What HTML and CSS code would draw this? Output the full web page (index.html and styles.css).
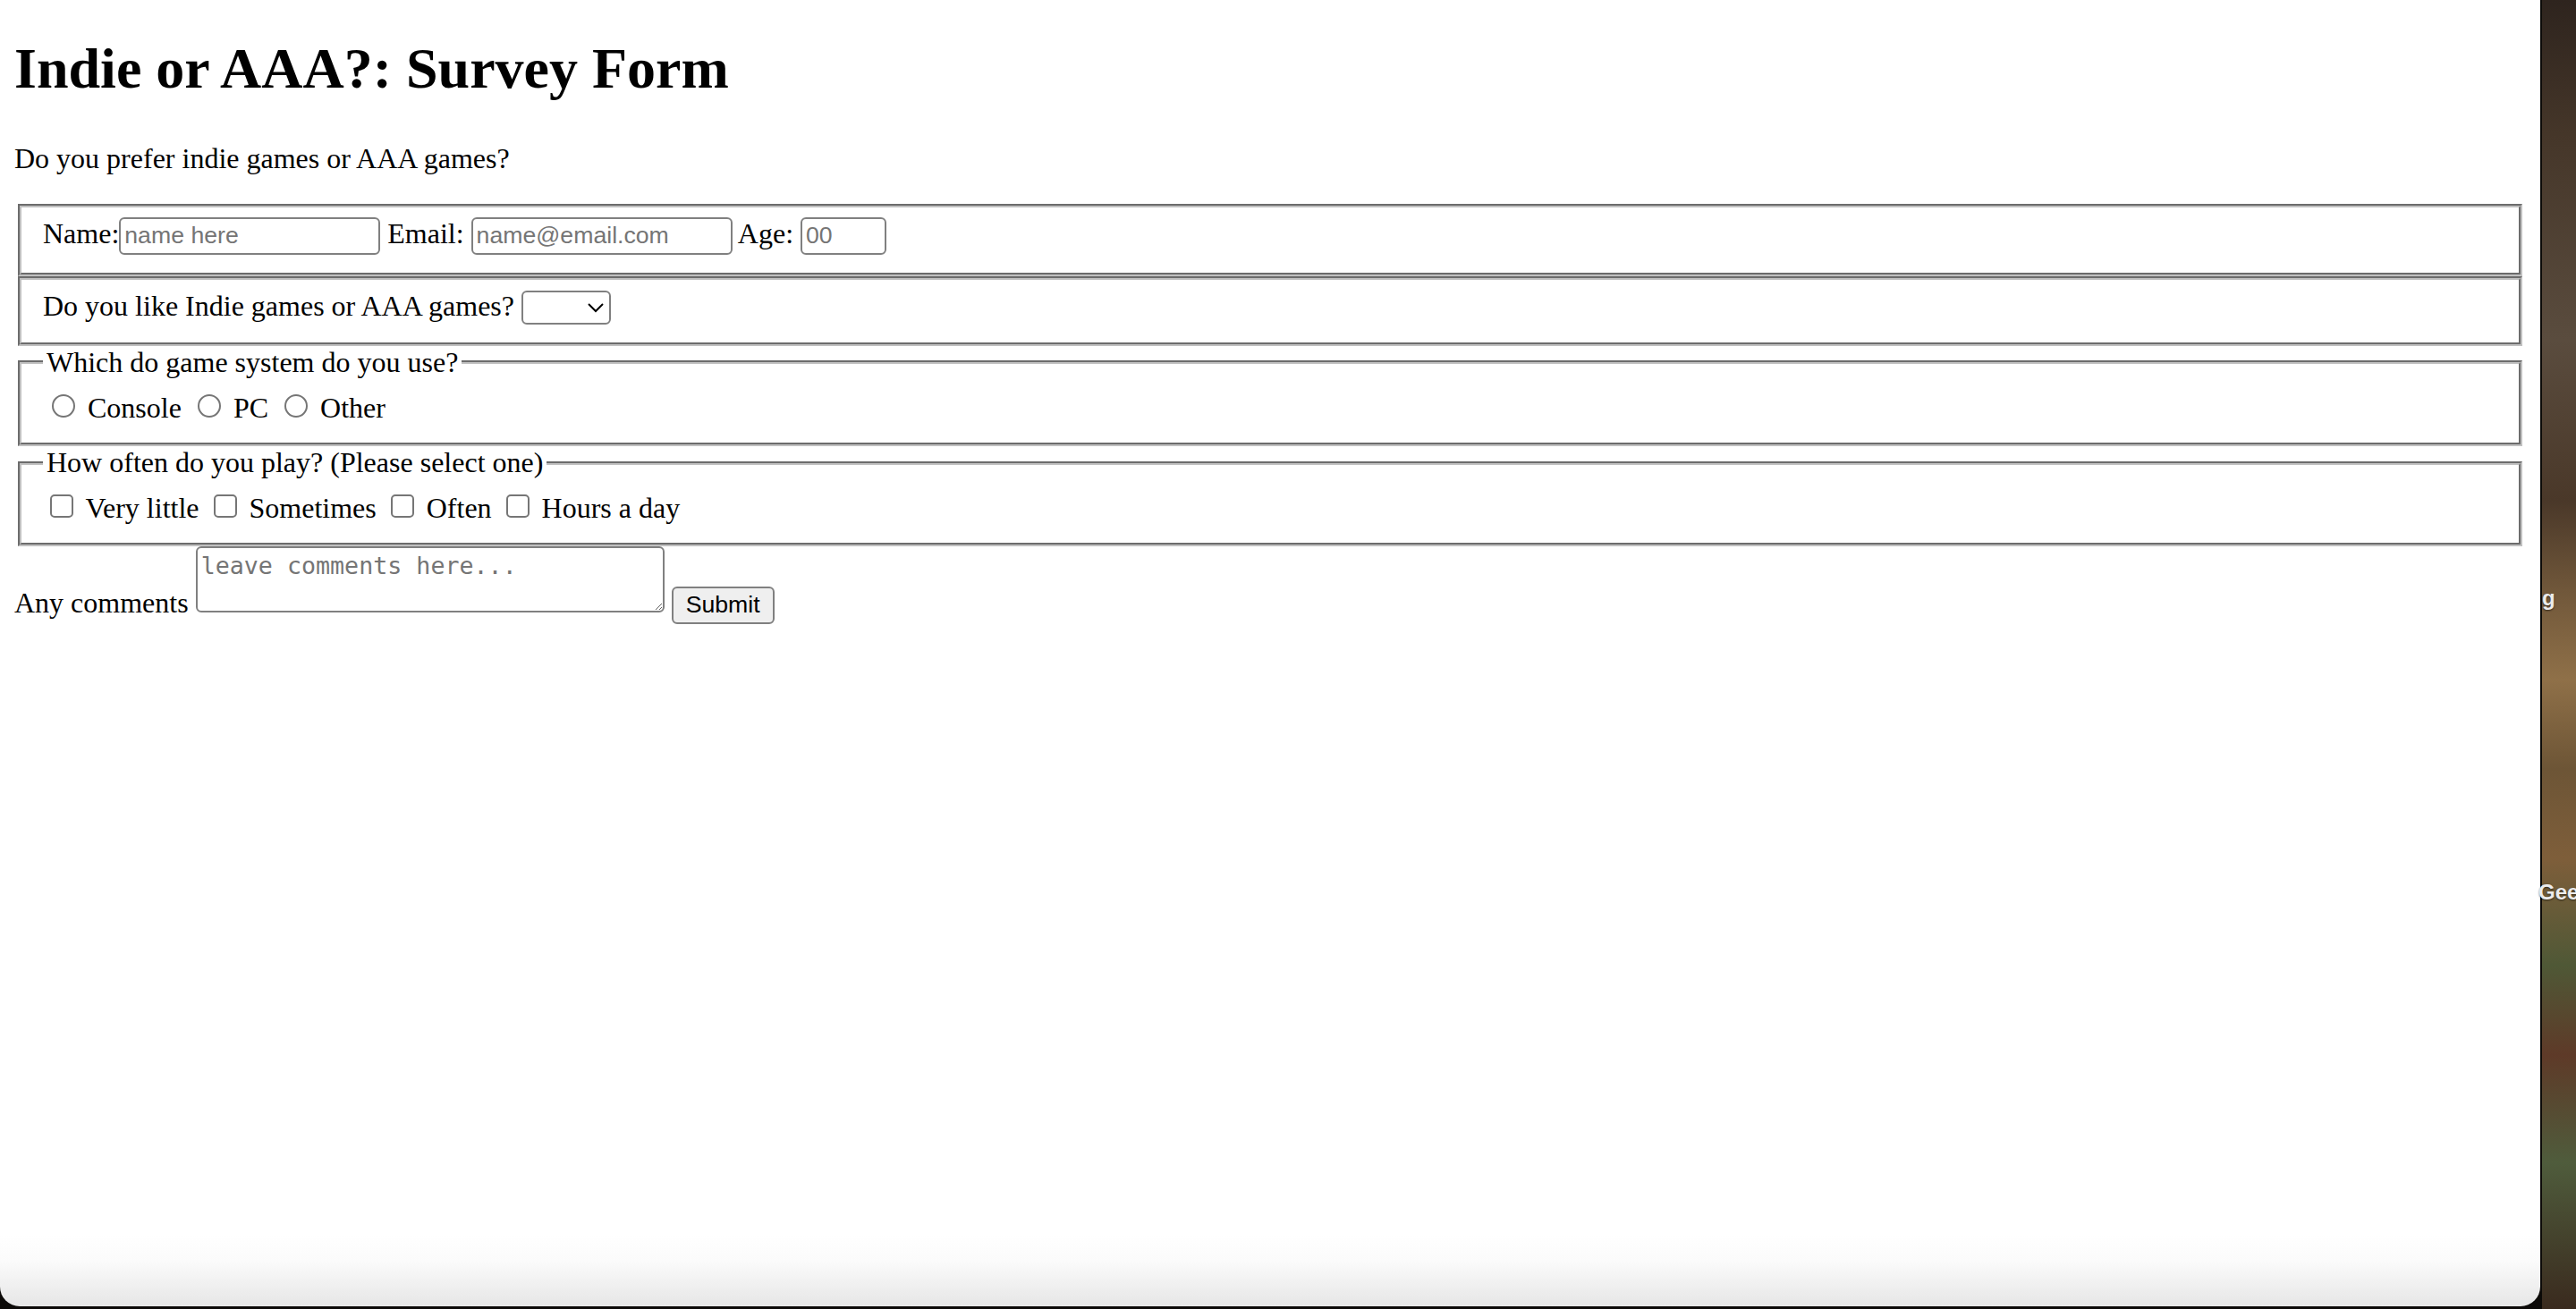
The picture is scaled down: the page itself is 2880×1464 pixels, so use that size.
FILE: index.html
```html
<!DOCTYPE html>
<html lang="en">
<head>
<meta charset="utf-8">
<title>Indie or AAA?: Survey Form</title>
<link rel="stylesheet" href="styles.css">
</head>
<body class="desktop">
  <main class="window">
    <div class="page">
      <h1 class="title">Indie or AAA?: Survey Form</h1>
      <p class="intro">Do you prefer indie games or AAA games?</p>
      <form class="survey">
        <fieldset class="group">
          <label class="field">Name:<input class="text-input" type="text" placeholder="name here"></label> <label class="field">Email: <input class="text-input" type="email" placeholder="name@email.com"></label> <label class="field">Age: <input class="text-input age-input" type="number" placeholder="00"></label>
        </fieldset>
        <fieldset class="group">
          <label class="field">Do you like Indie games or AAA games? <select class="choice"><option value=""></option><option>Indie</option><option>AAA</option></select></label>
        </fieldset>
        <fieldset class="group">
          <legend class="legend">Which do game system do you use?</legend>
          <label class="option"><input class="radio" type="radio" name="system"> Console</label> <label class="option"><input class="radio" type="radio" name="system"> PC</label> <label class="option"><input class="radio" type="radio" name="system"> Other</label>
        </fieldset>
        <fieldset class="group">
          <legend class="legend">How often do you play? (Please select one)</legend>
          <label class="option"><input class="check" type="checkbox"> Very little</label> <label class="option"><input class="check" type="checkbox"> Sometimes</label> <label class="option"><input class="check" type="checkbox"> Often</label> <label class="option"><input class="check" type="checkbox"> Hours a day</label>
        </fieldset>
        <label class="field">Any comments <textarea class="comments" placeholder="leave comments here..."></textarea></label> <input class="submit" type="submit" value="Submit">
      </form>
    </div>
  </main>
  <span class="icon-label label-one">g</span>
  <span class="icon-label label-two">Gee</span>
</body>
</html>
```

FILE: styles.css
```css
html, body {
  margin: 0;
  padding: 0;
}

.desktop {
  position: relative;
  width: 2880px;
  height: 1464px;
  overflow: hidden;
  background:
    linear-gradient(to right, #0c0a08 0, #0c0a08 2842px, transparent 2842px),
    linear-gradient(to bottom,
      #2e241e 0,
      #453629 150px,
      #5a4c3e 380px,
      #4a3829 560px,
      #70573a 660px,
      #8f7048 760px,
      #6d5536 860px,
      #7e5e3a 960px,
      #4f5836 1080px,
      #5e3a28 1180px,
      #4f5c3c 1300px,
      #3a2a1e 1464px);
  background-size: 2842px 1464px, 100% 100%;
  background-repeat: no-repeat;
}

.window {
  display: block;
  width: 2840px;
  height: 1461px;
  overflow: hidden;
  border-radius: 0 0 22px 22px;
  background: linear-gradient(to bottom, #ffffff 0, #ffffff 1380px, #fbfbfb 1410px, #e6e6e6 1461px);
}

.page {
  zoom: 2;
  margin: 8px;
  font-family: "Liberation Serif", "Times New Roman", serif;
  font-size: 16px;
  color: #000;
}

.title {
  font-size: 32px;
  font-weight: bold;
  margin: 20px 0 22.5px;
  line-height: 36.8px;
}

.intro {
  margin: 16px 0;
}

.survey {
  margin: 0;
}

.group {
  margin: 0 2px;
  padding: 0.35em 0.75em 0.625em;
  border: 2px groove #c0c0c0;
  min-inline-size: min-content;
}

.legend {
  padding: 0 2px;
}

.text-input {
  box-sizing: border-box;
  width: 146px;
  height: 21px;
  margin: 0;
  padding: 1px 2px;
  font-family: "Liberation Sans", Arial, sans-serif;
  font-size: 13.333px;
  border: 1px solid #808080;
  border-radius: 3px;
  background: #fff;
  color: #000;
}

.age-input {
  width: 48px;
}

.age-input::-webkit-inner-spin-button,
.age-input::-webkit-outer-spin-button {
  -webkit-appearance: none;
  margin: 0;
}

.text-input::placeholder,
.comments::placeholder {
  color: #757575;
}

.choice {
  box-sizing: border-box;
  width: 50px;
  height: 19px;
  margin: 0;
  font-family: "Liberation Sans", Arial, sans-serif;
  font-size: 13.333px;
  border: 1px solid #808080;
  border-radius: 3px;
  background-color: #fff;
}

.radio {
  margin: 3px 3px 0 5px;
}

.check {
  margin: 3px 3px 3px 4px;
}

.comments {
  box-sizing: border-box;
  width: 262px;
  height: 37px;
  margin: 0;
  padding: 2px;
  font-family: "DejaVu Sans Mono", "Liberation Mono", monospace;
  font-size: 13.333px;
  border: 1px solid #808080;
  border-radius: 3px;
  vertical-align: baseline;
}

.submit {
  box-sizing: border-box;
  height: 21px;
  margin: 0;
  padding: 1px 7px;
  font-family: "Liberation Sans", Arial, sans-serif;
  font-size: 13.333px;
  color: #000;
  background: #efefef;
  border: 1px solid #808080;
  border-radius: 3px;
}

.icon-label {
  position: absolute;
  font-family: "Liberation Sans", Arial, sans-serif;
  font-size: 24px;
  font-weight: bold;
  color: #ececec;
  text-shadow: 0 1px 2px rgba(0, 0, 0, 0.6);
  z-index: 0;
}

.label-one {
  left: 2842px;
  top: 655px;
}

.label-two {
  left: 2838px;
  top: 984px;
}
```
